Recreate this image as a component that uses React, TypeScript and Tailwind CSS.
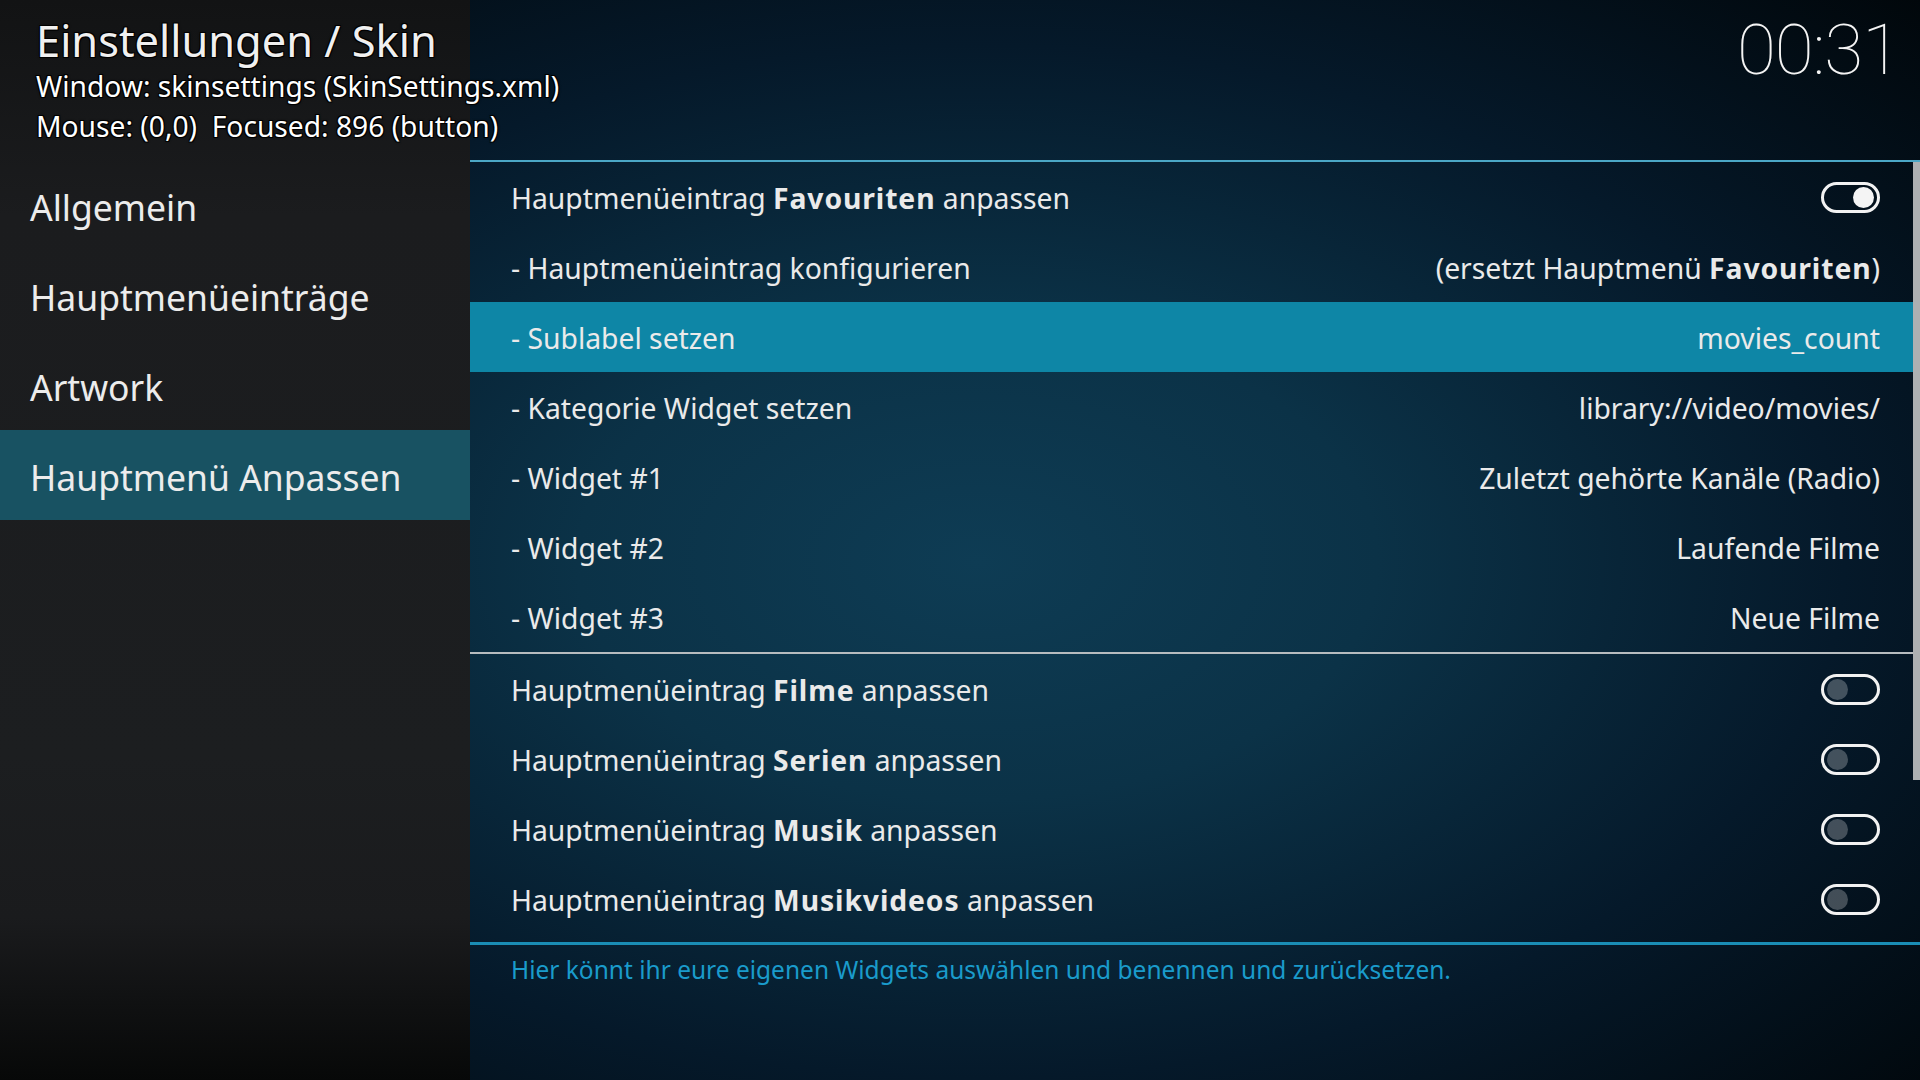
import React from 'react';

type Row = {
  label: React.ReactNode;
  value?: React.ReactNode;
  toggle?: 'on' | 'off';
  active?: boolean;
};

const sideItems = ['Allgemein', 'Hauptmenüeinträge', 'Artwork', 'Hauptmenü Anpassen'];

const B = ({ children }: { children: React.ReactNode }) => (
  <b className="font-bold tracking-[0.9px]">{children}</b>
);

const favRows: Row[] = [
  { label: <>Hauptmenüeintrag <B>Favouriten</B> anpassen</>, toggle: 'on' },
  { label: '- Hauptmenüeintrag konfigurieren', value: <>(ersetzt Hauptmenü <B>Favouriten</B>)</> },
  { label: '- Sublabel setzen', value: 'movies_count', active: true },
  { label: '- Kategorie Widget setzen', value: 'library://video/movies/' },
  { label: '- Widget #1', value: 'Zuletzt gehörte Kanäle (Radio)' },
  { label: '- Widget #2', value: 'Laufende Filme' },
  { label: '- Widget #3', value: 'Neue Filme' },
];

const otherRows: Row[] = [
  { label: <>Hauptmenüeintrag <B>Filme</B> anpassen</>, toggle: 'off' },
  { label: <>Hauptmenüeintrag <B>Serien</B> anpassen</>, toggle: 'off' },
  { label: <>Hauptmenüeintrag <B>Musik</B> anpassen</>, toggle: 'off' },
  { label: <>Hauptmenüeintrag <B>Musikvideos</B> anpassen</>, toggle: 'off' },
];

const Toggle = ({ on }: { on: boolean }) => (
  <div className={`w-[59px] h-[31px] rounded-full border-[3px] border-[#f2f2f2] flex items-center px-[3px] ${on ? 'justify-end' : 'justify-start'}`}>
    <div className={`w-[21px] h-[21px] rounded-full ${on ? 'bg-[#f4f4f4]' : 'bg-white/25'}`} />
  </div>
);

const ListRow = ({ row }: { row: Row }) => (
  <div className={`h-[70px] flex items-center justify-between pl-[41px] pr-[33px] text-[28.3px] text-[#eaeaea] whitespace-nowrap ${row.active ? 'bg-[#0e86a6]' : ''}`}>
    <span className="pt-[2px]">{row.label}</span>
    {row.toggle && <Toggle on={row.toggle === 'on'} />}
    {row.value && <span className="pt-[2px]">{row.value}</span>}
  </div>
);

export default function App() {
  const outline = '[text-shadow:1px_1px_0_#000,-1px_-1px_0_#000,1px_-1px_0_#000,-1px_1px_0_#000,0_0_3px_#000]';

  return (
    <div className="w-[1920px] h-[1080px] flex overflow-hidden font-['Noto_Sans',sans-serif] text-[#ececec]">
      {/* Sidebar */}
      <div className="w-[470px] shrink-0 flex flex-col bg-[linear-gradient(180deg,#121314_0%,#1b1c1e_20%,#1c1e20_70%,#1a1b1d_85%,#070808_100%)]">
        <div className="h-[160px] pt-[16px] pl-[36px] relative z-10 whitespace-nowrap">
          <div className={`text-[43.4px] leading-[50px] text-[#f0f0f0] ${outline}`}>Einstellungen / Skin</div>
          <div className={`text-[28.2px] leading-[40px] text-white ${outline}`}>Window: skinsettings (SkinSettings.xml)</div>
          <div className={`text-[28.2px] leading-[40px] text-white ${outline}`}>Mouse: (0,0)&nbsp; Focused: 896 (button)</div>
        </div>
        <nav className="flex flex-col">
          {sideItems.map((item, i) => (
            <div
              key={item}
              className={`h-[90px] flex items-center pl-[30px] pt-[6px] text-[35.5px] text-[#ececec] ${i === 3 ? 'bg-[#185262]' : ''}`}
            >
              {item}
            </div>
          ))}
        </nav>
      </div>

      {/* Main panel */}
      <div className="flex-1 flex flex-col bg-[radial-gradient(ellipse_at_35%_52%,#0e3c54_0%,#0b3247_30%,#05192a_65%,#01070b_100%)]">
        <div className="h-[160px] flex justify-end items-start pr-[20px]">
          <div className="font-['Roboto',sans-serif] font-thin text-[71px] leading-none mt-[14px] tracking-[-1px] text-[#f4f4f4]">00:31</div>
        </div>
        <div className="h-[2px] bg-[#4ba7c6]" />

        <div className="flex">
          <div className="flex-1 flex flex-col">
            {favRows.map((r, i) => <ListRow key={'f' + i} row={r} />)}
            <div className="h-[2px] bg-[#b7bcbf]" />
            {otherRows.map((r, i) => <ListRow key={'o' + i} row={r} />)}
          </div>
          <div className="w-[7px] flex flex-col">
            <div className="h-[618px] bg-[#adb0b2]" />
          </div>
        </div>

        <div className="h-[3px] mt-[8px] bg-[#1a8db5]" />
        <div className="pl-[41px] pt-[7px] text-[24.5px] text-[#1a9bcb] whitespace-nowrap">
          Hier könnt ihr eure eigenen Widgets auswählen und benennen und zurücksetzen.
        </div>
      </div>
    </div>
  );
}
